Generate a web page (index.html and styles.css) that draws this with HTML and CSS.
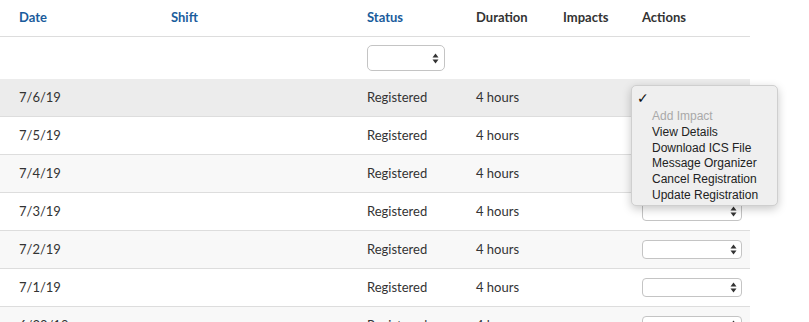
FILE: index.html
```html
<!DOCTYPE html>
<html>
<head>
<meta charset="utf-8">
<link rel="stylesheet" href="styles.css">
</head>
<body>
<div class="wrap">
<table class="grid">
  <colgroup>
    <col class="c-date"><col class="c-shift"><col class="c-status"><col class="c-dur"><col class="c-imp"><col class="c-act">
  </colgroup>
  <thead>
    <tr class="head">
      <th class="sort">Date</th>
      <th class="sort">Shift</th>
      <th class="sort">Status</th>
      <th>Duration</th>
      <th>Impacts</th>
      <th>Actions</th>
    </tr>
    <tr class="filter">
      <td></td><td></td>
      <td><div class="sel sel-lg"><svg width="7" height="11" viewBox="0 0 7 11"><path d="M3.5 0.5L6.5 4.5H0.5Z M3.5 10.5L6.5 6.5H0.5Z" fill="#333"/></svg></div></td>
      <td></td><td></td><td></td>
    </tr>
  </thead>
  <tbody>
    <tr class="odd hover"><td>7/6/19</td><td></td><td>Registered</td><td>4 hours</td><td></td><td><div class="sel"><svg width="7" height="11" viewBox="0 0 7 11"><path d="M3.5 0.5L6.5 4.5H0.5Z M3.5 10.5L6.5 6.5H0.5Z" fill="#333"/></svg></div></td></tr>
    <tr><td>7/5/19</td><td></td><td>Registered</td><td>4 hours</td><td></td><td><div class="sel"><svg width="7" height="11" viewBox="0 0 7 11"><path d="M3.5 0.5L6.5 4.5H0.5Z M3.5 10.5L6.5 6.5H0.5Z" fill="#333"/></svg></div></td></tr>
    <tr class="odd"><td>7/4/19</td><td></td><td>Registered</td><td>4 hours</td><td></td><td><div class="sel"><svg width="7" height="11" viewBox="0 0 7 11"><path d="M3.5 0.5L6.5 4.5H0.5Z M3.5 10.5L6.5 6.5H0.5Z" fill="#333"/></svg></div></td></tr>
    <tr><td>7/3/19</td><td></td><td>Registered</td><td>4 hours</td><td></td><td><div class="sel"><svg width="7" height="11" viewBox="0 0 7 11"><path d="M3.5 0.5L6.5 4.5H0.5Z M3.5 10.5L6.5 6.5H0.5Z" fill="#333"/></svg></div></td></tr>
    <tr class="odd"><td>7/2/19</td><td></td><td>Registered</td><td>4 hours</td><td></td><td><div class="sel"><svg width="7" height="11" viewBox="0 0 7 11"><path d="M3.5 0.5L6.5 4.5H0.5Z M3.5 10.5L6.5 6.5H0.5Z" fill="#333"/></svg></div></td></tr>
    <tr><td>7/1/19</td><td></td><td>Registered</td><td>4 hours</td><td></td><td><div class="sel"><svg width="7" height="11" viewBox="0 0 7 11"><path d="M3.5 0.5L6.5 4.5H0.5Z M3.5 10.5L6.5 6.5H0.5Z" fill="#333"/></svg></div></td></tr>
    <tr class="odd"><td>6/30/19</td><td></td><td>Registered</td><td>4 hours</td><td></td><td><div class="sel"><svg width="7" height="11" viewBox="0 0 7 11"><path d="M3.5 0.5L6.5 4.5H0.5Z M3.5 10.5L6.5 6.5H0.5Z" fill="#333"/></svg></div></td></tr>
  </tbody>
</table>
<div class="popup">
  <div class="check">✓</div>
  <div class="opt disabled">Add Impact</div>
  <div class="opt">View Details</div>
  <div class="opt">Download ICS File</div>
  <div class="opt">Message Organizer</div>
  <div class="opt">Cancel Registration</div>
  <div class="opt">Update Registration</div>
</div>
</div>
</body>
</html>
```

FILE: styles.css
```css
html, body {
  margin: 0;
  padding: 0;
  background: #fff;
  overflow: hidden;
}
.wrap {
  position: relative;
  width: 809px;
  height: 322px;
  overflow: hidden;
}
.grid {
  width: 750px;
  table-layout: fixed;
  border-collapse: collapse;
  font-family: Lato, "Open Sans", sans-serif;
  font-size: 13px;
  color: #333;
}
.c-date { width: 152px; }
.c-shift { width: 196px; }
.c-status { width: 109px; }
.c-dur { width: 87px; }
.c-imp { width: 79px; }
.c-act { width: 127px; }
.grid th, .grid td {
  padding: 0 0 2px 19px;
  text-align: left;
  vertical-align: middle;
}
.head th {
  height: 34px;
  font-weight: 700;
  color: #333;
  border-bottom: 1px solid #ddd;
}
.head th.sort { color: #1a5c9c; }
.filter td { height: 42px; padding-bottom: 0; }
tbody tr td {
  height: 35px;
  border-bottom: 1px solid #ddd;
}
tbody tr td:last-child { padding-bottom: 0; height: 37px; }
tbody tr.odd td { background: #f8f8f8; }
tbody tr.hover td { background: #ececec; }
.sel {
  box-sizing: border-box;
  width: 100px;
  height: 19px;
  border: 1px solid #c4c4c4;
  border-radius: 4px;
  background: #fff;
  display: flex;
  align-items: center;
  justify-content: flex-end;
  padding-right: 4px;
}
.sel-lg {
  width: 78px;
  height: 26px;
  border-radius: 5px;
  padding-right: 5px;
}
.popup {
  position: absolute;
  left: 631px;
  top: 85px;
  width: 147px;
  height: 121px;
  box-sizing: border-box;
  background: #efefef;
  border: 1px solid #cfcfcf;
  border-radius: 5px;
  box-shadow: 0 3px 10px rgba(0,0,0,0.22);
  font-family: "Liberation Sans", Arial, sans-serif;
  font-size: 12px;
  color: #222;
  padding: 3px 0 0 0;
}
.check {
  height: 19px;
  line-height: 19px;
  padding-left: 5px;
  font-size: 14px;
  font-family: "DejaVu Sans", sans-serif;
  font-weight: bold;
  color: #111;
}
.opt {
  height: 15.8px;
  line-height: 16px;
  padding-left: 20px;
}
.opt.disabled { color: #a9a9a9; }
```
